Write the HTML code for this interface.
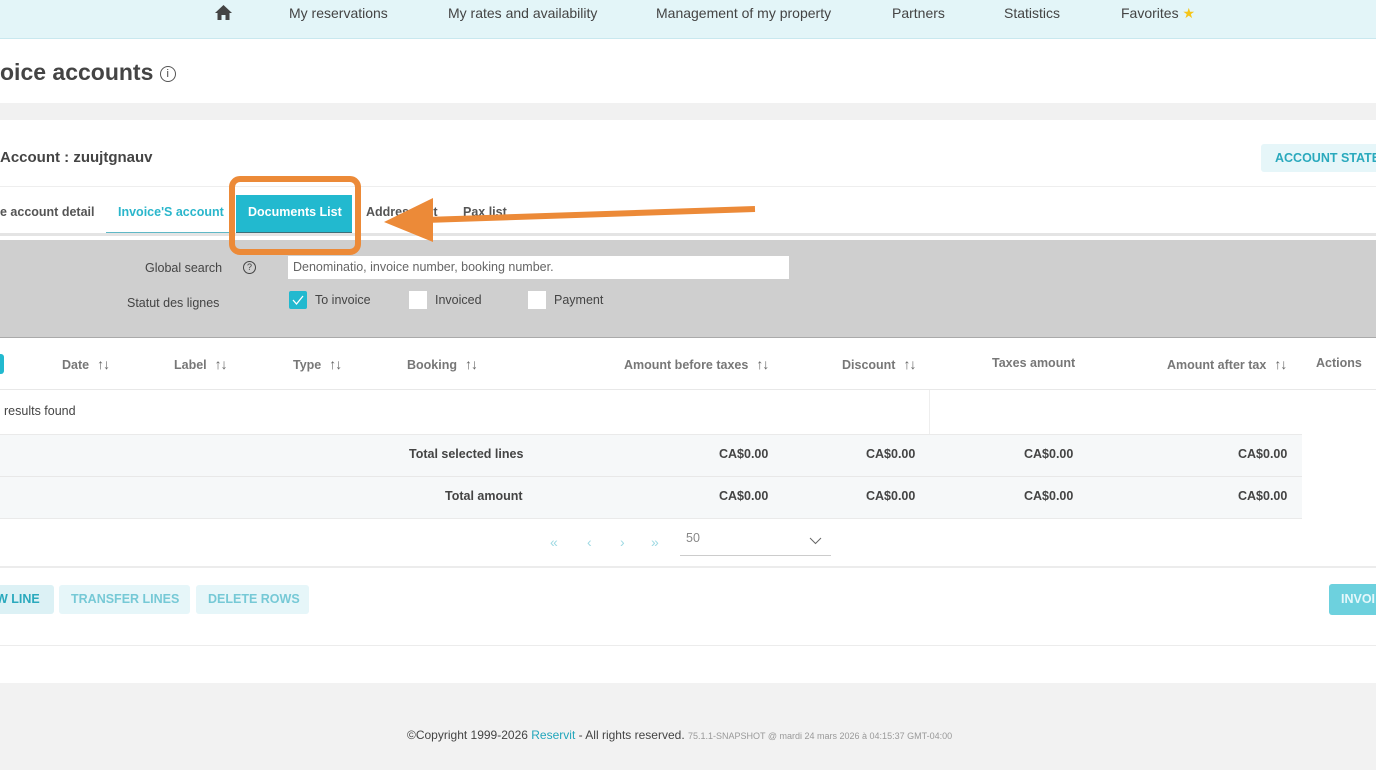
<!DOCTYPE html>
<html><head><meta charset="utf-8"><style>
*{margin:0;padding:0;box-sizing:border-box}
body{width:1376px;height:770px;overflow:hidden;position:relative;font-family:"Liberation Sans",sans-serif;background:#fff;color:#444}
.a{position:absolute;white-space:nowrap}
.nav{font-size:14px;color:#444;top:5px}
.th{font-size:12.5px;font-weight:bold;color:#777;top:356px}
.s{color:#666;font-weight:normal;letter-spacing:-1px;margin-left:8px;font-size:14px}
.tot{font-size:12.5px;font-weight:bold;color:#444}
.btn{position:absolute;white-space:nowrap;top:585px;height:29px;background:#e6f6f9;color:#76c9d6;font-size:12.5px;font-weight:bold;line-height:29px;padding:0 12px;border-radius:3px;overflow:hidden}
.cb{position:absolute;width:18px;height:18px;background:#fff;top:291px}
</style></head><body>
<div class="a" style="left:0;top:0;width:1376px;height:39px;background:#e3f5f8;border-bottom:1px solid #c9e8ef"></div>
<svg class="a" style="left:215px;top:5px" width="17" height="15" viewBox="0 0 17 15"><path d="M8.5 0L0 8h2.5v7h4v-5h4v5h4V8H17z" fill="#444"/></svg>
<div class="a nav" style="left:289px">My reservations</div>
<div class="a nav" style="left:448px">My rates and availability</div>
<div class="a nav" style="left:656px">Management of my property</div>
<div class="a nav" style="left:892px">Partners</div>
<div class="a nav" style="left:1004px">Statistics</div>
<div class="a nav" style="left:1121px">Favorites <span style="color:#f5c518">★</span></div>
<div class="a" style="left:0;top:59px;font-size:23px;font-weight:bold;color:#444">oice accounts <span style="font-weight:normal;border:1.3px solid #555;border-radius:50%;display:inline-block;width:16px;height:16px;line-height:14px;text-align:center;font-size:11px;vertical-align:3px">i</span></div>
<div class="a" style="left:0;top:103px;width:1376px;height:17px;background:#f1f1f1"></div>
<div class="a" style="left:0;top:149px;font-size:15px;font-weight:bold;color:#444">Account : zuujtgnauv</div>
<div class="a" style="left:1261px;top:144px;width:120px;height:28px;background:#e6f6f9;border-radius:3px;color:#2aa9bd;font-size:12.5px;font-weight:bold;line-height:28px;padding-left:14px">ACCOUNT STATE</div>
<div class="a" style="left:0;top:186px;width:1376px;height:1px;background:#eee"></div>
<div class="a" style="left:0;top:205px;font-size:12.5px;font-weight:bold;color:#555">e account detail</div>
<div class="a" style="left:106px;top:191px;width:124px;height:44px;border-bottom:3px solid #5fb8c6"></div>
<div class="a" style="left:118px;top:205px;font-size:12.5px;font-weight:bold;color:#2ab6cb">Invoice'S account</div>
<div class="a" style="left:236px;top:195px;width:116px;height:40px;background:#22b9cf;border-bottom:3px solid #3f6e78"></div>
<div class="a" style="left:248px;top:205px;font-size:12.5px;font-weight:bold;color:#fff">Documents List</div>
<div class="a" style="left:366px;top:205px;font-size:12.5px;font-weight:bold;color:#555">Address list</div>
<div class="a" style="left:463px;top:205px;font-size:12.5px;font-weight:bold;color:#555">Pax list</div>
<div class="a" style="left:0;top:233px;width:1376px;height:3px;background:#e4e4e4"></div>
<div class="a" style="left:0;top:240px;width:1376px;height:98px;background:#cfcfcf;border-bottom:1px solid #aaa"></div>
<div class="a" style="left:145px;top:261px;font-size:12.5px;color:#444">Global search</div>
<div class="a" style="left:243px;top:261px;width:13px;height:13px;border:1.2px solid #444;border-radius:50%;font-size:9px;text-align:center;line-height:11px">?</div>
<div class="a" style="left:288px;top:256px;width:501px;height:23px;background:#fff;font-size:12.5px;color:#666;padding:4px 5px">Denominatio, invoice number, booking number.</div>
<div class="a" style="left:127px;top:296px;font-size:12.5px;color:#444">Statut des lignes</div>
<div class="cb" style="left:289px;background:#22b9cf;border-radius:2px"><svg width="18" height="18"><path d="M4 9l3.5 4L14 5" stroke="#fff" stroke-width="1.3" fill="none"/></svg></div>
<div class="a" style="left:315px;top:293px;font-size:12.5px;color:#444">To invoice</div>
<div class="cb" style="left:409px"></div>
<div class="a" style="left:435px;top:293px;font-size:12.5px;color:#444">Invoiced</div>
<div class="cb" style="left:528px"></div>
<div class="a" style="left:554px;top:293px;font-size:12.5px;color:#444">Payment</div>
<div class="a" style="left:0;top:354px;width:4px;height:20px;background:#22b9cf;border-radius:0 3px 3px 0"></div>
<div class="a th" style="left:62px">Date<span class="s">↑↓</span></div>
<div class="a th" style="left:174px">Label<span class="s">↑↓</span></div>
<div class="a th" style="left:293px">Type<span class="s">↑↓</span></div>
<div class="a th" style="left:407px">Booking<span class="s">↑↓</span></div>
<div class="a th" style="left:624px">Amount before taxes<span class="s">↑↓</span></div>
<div class="a th" style="left:842px">Discount<span class="s">↑↓</span></div>
<div class="a th" style="left:992px">Taxes amount</div>
<div class="a th" style="left:1167px">Amount after tax<span class="s">↑↓</span></div>
<div class="a th" style="left:1316px">Actions</div>
<div class="a" style="left:0;top:389px;width:1376px;height:1px;background:#e8e8e8"></div>
<div class="a" style="left:0;top:390px;width:930px;height:45px;border-right:1px solid #eee"></div>
<div class="a" style="left:4px;top:404px;font-size:12.5px;color:#444">results found</div>
<div class="a" style="left:0;top:434px;width:1302px;height:85px;background:#f6f8f9;border-top:1px solid #eaeaea;border-bottom:1px solid #eaeaea"></div>
<div class="a" style="left:0;top:476px;width:1302px;height:1px;background:#e8e8e8"></div>
<div class="a tot" style="left:409px;top:447px">Total selected lines</div>
<div class="a tot" style="left:445px;top:489px">Total amount</div>
<div class="a tot" style="left:719px;top:447px">CA$0.00</div><div class="a tot" style="left:866px;top:447px">CA$0.00</div><div class="a tot" style="left:1024px;top:447px">CA$0.00</div><div class="a tot" style="left:1238px;top:447px">CA$0.00</div>
<div class="a tot" style="left:719px;top:489px">CA$0.00</div><div class="a tot" style="left:866px;top:489px">CA$0.00</div><div class="a tot" style="left:1024px;top:489px">CA$0.00</div><div class="a tot" style="left:1238px;top:489px">CA$0.00</div>
<div class="a" style="left:550px;top:534px;font-size:14px;color:#9ed9e3">«</div>
<div class="a" style="left:587px;top:534px;font-size:14px;color:#9ed9e3">‹</div>
<div class="a" style="left:620px;top:534px;font-size:14px;color:#9ed9e3">›</div>
<div class="a" style="left:651px;top:534px;font-size:14px;color:#9ed9e3">»</div>
<div class="a" style="left:680px;top:531px;width:151px;height:25px;border-bottom:1px solid #ccc;font-size:12.5px;color:#888;padding-left:6px">50<svg style="position:absolute;right:9px;top:6px" width="13" height="8"><path d="M1 1l5.5 5.5L12 1" stroke="#666" fill="none"/></svg></div>
<div class="a" style="left:0;top:566px;width:1376px;height:2px;background:#ececec"></div>
<div class="btn" style="left:-14px;background:#dcf1f5;color:#2aa9bd;width:68px;padding-left:10px">W LINE</div>
<div class="btn" style="left:59px;width:131px">TRANSFER LINES</div>
<div class="btn" style="left:196px;width:113px">DELETE ROWS</div>
<div class="btn" style="left:1329px;background:#6dd1de;color:#e6f8fb;width:60px;top:584px;height:31px;line-height:31px">INVOI</div>
<div class="a" style="left:0;top:645px;width:1376px;height:1px;background:#ececec"></div>
<div class="a" style="left:0;top:683px;width:1376px;height:87px;background:#f2f2f2"></div>
<div class="a" style="left:407px;top:728px;font-size:12px;color:#444">©Copyright 1999-2026 <span style="color:#22a6bb">Reservit</span> - All rights reserved. <span style="font-size:9px;color:#999">75.1.1-SNAPSHOT @ mardi 24 mars 2026 à 04:15:37 GMT-04:00</span></div>
<svg class="a" style="left:0;top:0" width="1376" height="770">
<rect x="232" y="179" width="126" height="73" rx="8" fill="none" stroke="#ec8a38" stroke-width="6"/>
<line x1="755" y1="209" x2="425" y2="220" stroke="#ec8a38" stroke-width="6"/>
<path d="M384 222L433 198L433 242Z" fill="#ec8a38"/>
</svg>
</body></html>
